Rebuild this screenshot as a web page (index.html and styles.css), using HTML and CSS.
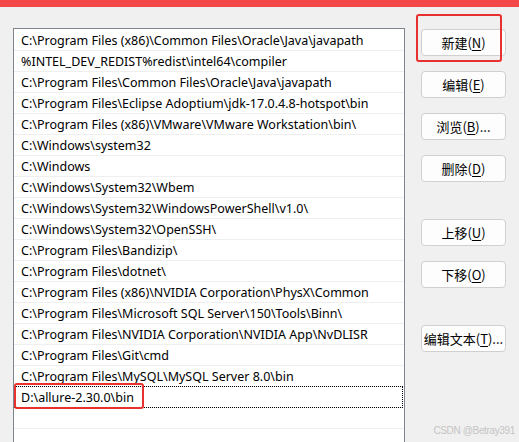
FILE: index.html
```html
<!DOCTYPE html>
<html lang="zh-CN">
<head>
<meta charset="utf-8">
<title>编辑环境变量</title>
<link rel="stylesheet" href="styles.css">
</head>
<body>
<div class="topbar"></div>
<div class="main">
  <div class="listbox">
    <div class="row">C:\Program Files (x86)\Common Files\Oracle\Java\javapath</div>
    <div class="row">%INTEL_DEV_REDIST%redist\intel64\compiler</div>
    <div class="row">C:\Program Files\Common Files\Oracle\Java\javapath</div>
    <div class="row">C:\Program Files\Eclipse Adoptium\jdk-17.0.4.8-hotspot\bin</div>
    <div class="row">C:\Program Files (x86)\VMware\VMware Workstation\bin\</div>
    <div class="row">C:\Windows\system32</div>
    <div class="row">C:\Windows</div>
    <div class="row">C:\Windows\System32\Wbem</div>
    <div class="row">C:\Windows\System32\WindowsPowerShell\v1.0\</div>
    <div class="row">C:\Windows\System32\OpenSSH\</div>
    <div class="row">C:\Program Files\Bandizip\</div>
    <div class="row">C:\Program Files\dotnet\</div>
    <div class="row">C:\Program Files (x86)\NVIDIA Corporation\PhysX\Common</div>
    <div class="row">C:\Program Files\Microsoft SQL Server\150\Tools\Binn\</div>
    <div class="row">C:\Program Files\NVIDIA Corporation\NVIDIA App\NvDLISR</div>
    <div class="row">C:\Program Files\Git\cmd</div>
    <div class="row">C:\Program Files\MySQL\MySQL Server 8.0\bin</div>
    <div class="row focus">D:\allure-2.30.0\bin</div>
    <div class="row"></div>
  </div>
  <div class="buttons">
    <div class="btn">新建(<u>N</u>)</div>
    <div class="btn">编辑(<u>E</u>)</div>
    <div class="btn">浏览(<u>B</u>)...</div>
    <div class="btn">删除(<u>D</u>)</div>
    <div class="btn group">上移(<u>U</u>)</div>
    <div class="btn">下移(<u>O</u>)</div>
    <div class="btn group">编辑文本(<u>T</u>)...</div>
  </div>
</div>
<div class="mark mark-new"></div>
<div class="mark mark-row"></div>
<div class="watermark">CSDN @Betray391</div>
</body>
</html>
```
FILE: styles.css
```css
html, body {
  margin: 0;
  padding: 0;
}
body {
  width: 519px;
  height: 442px;
  overflow: hidden;
  background: #f0f0f0;
  position: relative;
  font-family: "Noto Sans", "Noto Sans CJK SC", sans-serif;
  color: #000;
}
.topbar {
  height: 7px;
  background: #f44848;
}
.main {
  display: flex;
  align-items: flex-start;
  padding: 21px 0 0 13px;
}
.listbox {
  width: 390px;
  height: 430px;
  border: 1px solid #7f868e;
  background: #fff;
  padding-top: 1px;
  box-sizing: content-box;
}
.row {
  height: 20px;
  line-height: 21px;
  border-bottom: 1px solid #efefef;
  padding-left: 7px;
  font-size: 12.5px;
  white-space: nowrap;
  overflow: hidden;
}
.row.focus {
  outline: 1px dotted #000;
  outline-offset: -1px;
  margin-right: 1px;
  margin-top: -1px;
  height: 21px;
  line-height: 23px;
  padding-left: 7px;
}
.buttons {
  display: flex;
  flex-direction: column;
  gap: 15px;
  margin-left: 16px;
  padding-top: 1px;
}
.btn {
  width: 83px;
  height: 25px;
  border: 1px solid #d0d0d0;
  border-radius: 4px;
  background: #fdfdfd;
  font-family: "Noto Sans CJK SC", sans-serif;
  font-size: 13px;
  line-height: 25px;
  text-align: center;
  white-space: nowrap;
}
.btn u {
  text-underline-offset: 2px;
}
.btn.group {
  margin-top: 22px;
}
.mark {
  position: absolute;
  border: 2px solid #e8312e;
  border-radius: 3px;
  box-sizing: border-box;
}
.mark-new {
  left: 416px;
  top: 14px;
  width: 86px;
  height: 48px;
}
.mark-row {
  left: 14px;
  top: 383px;
  width: 130px;
  height: 26px;
}
.watermark {
  position: absolute;
  right: 4px;
  bottom: 6px;
  font-family: "Liberation Sans", sans-serif;
  font-size: 10px;
  letter-spacing: -0.35px;
  color: #c4c4c4;
}
```
